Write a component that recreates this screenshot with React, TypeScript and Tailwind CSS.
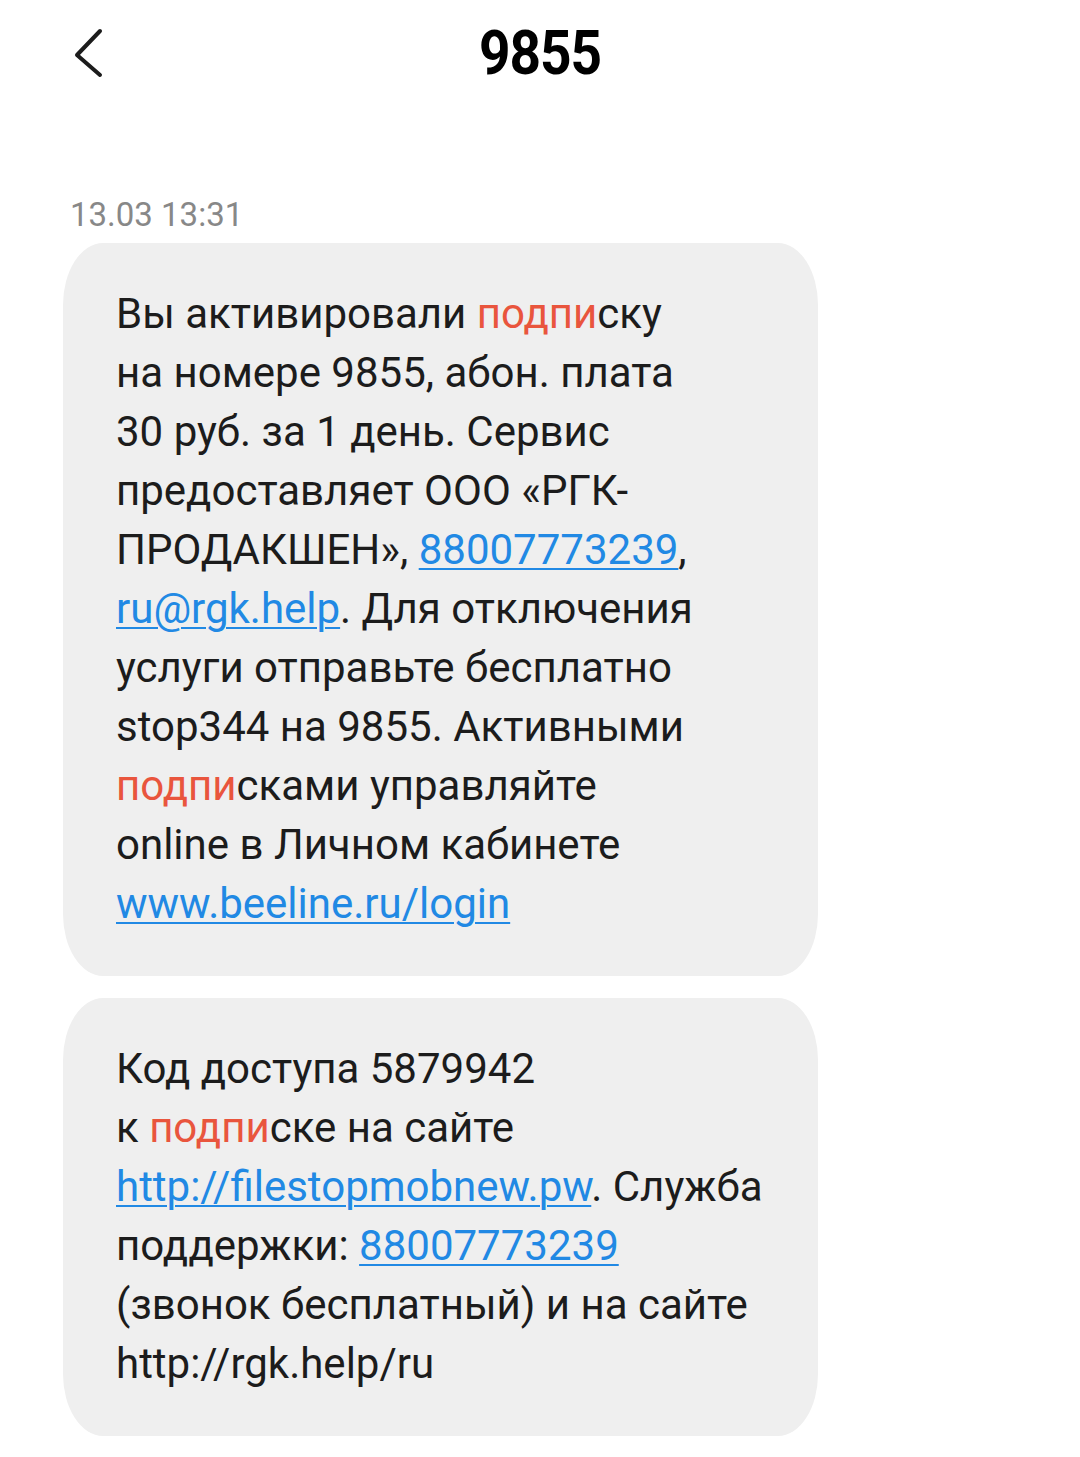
import React from 'react';

type Seg = { t: string; k?: 'red' | 'link' };

const first: Seg[][] = [
  [{ t: 'Вы активировали ' }, { t: 'подпи', k: 'red' }, { t: 'ску' }],
  [{ t: 'на номере 9855, абон. плата' }],
  [{ t: '30 руб. за 1 день. Сервис' }],
  [{ t: 'предоставляет ООО «РГК-' }],
  [{ t: 'ПРОДАКШЕН», ' }, { t: '88007773239', k: 'link' }, { t: ',' }],
  [{ t: 'ru@rgk.help', k: 'link' }, { t: '. Для отключения' }],
  [{ t: 'услуги отправьте бесплатно' }],
  [{ t: 'stop344 на 9855. Активными' }],
  [{ t: 'подпи', k: 'red' }, { t: 'сками управляйте' }],
  [{ t: 'online в Личном кабинете' }],
  [{ t: 'www.beeline.ru/login', k: 'link' }],
];

const second: Seg[][] = [
  [{ t: 'Код доступа 5879942' }],
  [{ t: 'к ' }, { t: 'подпи', k: 'red' }, { t: 'ске на сайте' }],
  [{ t: 'http://filestopmobnew.pw', k: 'link' }, { t: '. Служба' }],
  [{ t: 'поддержки: ' }, { t: '88007773239', k: 'link' }],
  [{ t: '(звонок бесплатный) и на сайте' }],
  [{ t: 'http://rgk.help/ru' }],
];

function Bubble({ lines }: { lines: Seg[][] }) {
  return (
    <div className="w-[755px] bg-[#efefef] rounded-[40px/62px] pl-[53px] pr-6 pt-[41px] pb-[43px]">
      {lines.map((line, i) => (
        <div key={i} className="h-[59px] leading-[59px] whitespace-nowrap">
          {line.map((s, j) => (
            <span
              key={j}
              className={
                s.k === 'red'
                  ? 'text-[#e9553d]'
                  : s.k === 'link'
                  ? 'text-[#2189e4] underline decoration-[2px] underline-offset-[4px]'
                  : ''
              }
            >
              {s.t}
            </span>
          ))}
        </div>
      ))}
    </div>
  );
}

export default function App() {
  return (
    <div className="w-[1080px] h-[1457px] bg-white overflow-hidden font-['Roboto',sans-serif] text-[#1c1c1c]">
      <div className="relative h-[110px] flex items-center justify-center">
        <svg className="absolute left-[70px] top-[28px]" width="36" height="50" viewBox="0 0 36 50" fill="none">
          <path d="M30 3 L7 27 L30 47" stroke="#1c1c1c" strokeWidth="4" strokeLinecap="round" strokeLinejoin="round" />
        </svg>
        <h1 className="text-[55px] font-bold text-black leading-none -mt-[4px] tracking-[-1px] scale-y-110">9855</h1>
      </div>
      <div className="pl-[70px] pt-[88px] text-[33px] text-[#888888] leading-none">13.03 13:31</div>
      <div className="pl-[63px] pt-[12px] flex flex-col gap-[22px] text-[42px]">
        <Bubble lines={first} />
        <Bubble lines={second} />
      </div>
    </div>
  );
}
